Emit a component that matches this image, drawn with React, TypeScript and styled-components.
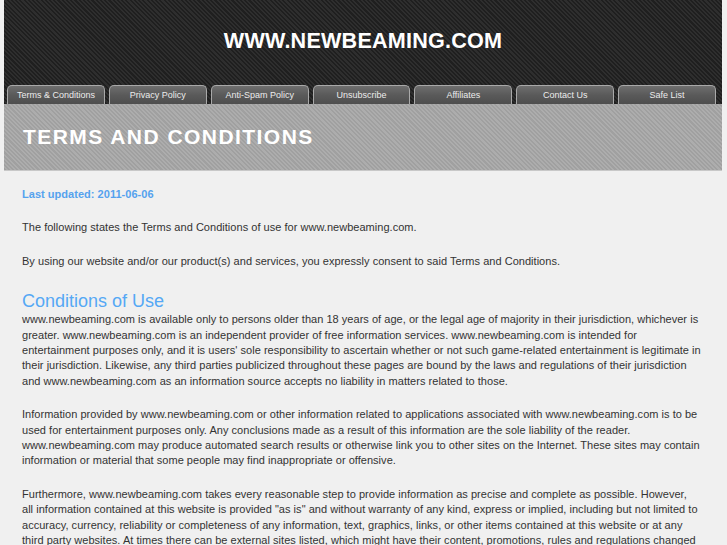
import styled, { createGlobalStyle } from "styled-components";

const GlobalStyle = createGlobalStyle`
    html, body {
        margin: 0;
        padding: 0;
        background: #f0f0f0;
        font-family: "Liberation Sans", Arial, sans-serif;
    }
`;

const Page = styled.div`
    width: 718px;
    margin-left: 4px;
`;

const Header = styled.div`
    background-color: #262626;
    background-image: repeating-linear-gradient(
        45deg,
        #1f1f1f 0px,
        #1f1f1f 1.5px,
        #2e2e2e 1.5px,
        #2e2e2e 3px
    );
    height: 104px;
    display: flex;
    flex-direction: column;
`;

const SiteTitle = styled.h1`
    margin: 0;
    height: 84px;
    display: flex;
    align-items: center;
    justify-content: center;
    color: #ffffff;
    font-size: 21.6px;
    font-weight: bold;
    letter-spacing: 0.2px;
    padding-bottom: 2px;
    box-sizing: border-box;
`;

const Tabs = styled.div`
    display: flex;
    gap: 4px;
    padding: 0 6px 0 3px;
    height: 20px;
    align-items: flex-end;
`;

const Tab = styled.a`
    flex: 1;
    height: 19px;
    box-sizing: border-box;
    border: 1px solid #a9a9a9;
    border-bottom: none;
    border-radius: 5px 5px 0 0;
    background: linear-gradient(#6e6e6e, #5a5a5a 50%, #4e4e4e);
    color: #ececec;
    font-size: 9px;
    display: flex;
    align-items: center;
    justify-content: center;
    text-decoration: none;
    padding-bottom: 1px;
`;

const Banner = styled.div`
    height: 67px;
    box-sizing: border-box;
    border-bottom: 1px solid #c8c8c8;
    background-color: #a6a6a6;
    background-image: repeating-linear-gradient(
        45deg,
        #a0a0a0 0px,
        #a0a0a0 1.5px,
        #adadad 1.5px,
        #adadad 3px
    );
    display: flex;
    align-items: center;
    padding: 0 0 0 19px;
`;

const BannerTitle = styled.h2`
    margin: 0;
    color: #ffffff;
    font-size: 21px;
    font-weight: bold;
    letter-spacing: 1.45px;
`;

const Content = styled.div`
    padding: 16px 19px 0 18px;
    color: #333333;
    font-size: 11px;
    line-height: 15.4px;
    letter-spacing: 0.03px;
`;

const Updated = styled.p`
    margin: 0 0 18px;
    color: #55a2ee;
    font-weight: bold;
`;

const Para = styled.p<{ $last?: boolean }>`
    margin: 0 0 ${(p) => (p.$last ? "0" : "18px")};
`;

const Heading = styled.h3`
    margin: 21px 0 0;
    color: #55a8f5;
    font-size: 18px;
    font-weight: normal;
    line-height: 22px;
    letter-spacing: 0;
`;

const tabs = [
    "Terms & Conditions",
    "Privacy Policy",
    "Anti-Spam Policy",
    "Unsubscribe",
    "Affiliates",
    "Contact Us",
    "Safe List",
];

const App = () => {
    return (
        <>
            <GlobalStyle />
            <Page>
                <Header>
                    <SiteTitle>WWW.NEWBEAMING.COM</SiteTitle>
                    <Tabs>
                        {tabs.map((t) => (
                            <Tab key={t} href="#">
                                {t}
                            </Tab>
                        ))}
                    </Tabs>
                </Header>
                <Banner>
                    <BannerTitle>TERMS AND CONDITIONS</BannerTitle>
                </Banner>
                <Content>
                    <Updated>Last updated: 2011-06-06</Updated>
                    <Para>The following states the Terms and Conditions of use for www.newbeaming.com.</Para>
                    <Para $last>
                        By using our website and/or our product(s) and services, you expressly consent to said Terms and Conditions.
                    </Para>
                    <Heading>Conditions of Use</Heading>
                    <Para>
                        www.newbeaming.com is available only to persons older than 18 years of age, or the legal age of majority in their jurisdiction, whichever is greater. www.newbeaming.com is an independent provider of free information services. www.newbeaming.com is intended for entertainment purposes only, and it is users' sole responsibility to ascertain whether or not such game-related entertainment is legitimate in their jurisdiction. Likewise, any third parties publicized throughout these pages are bound by the laws and regulations of their jurisdiction and www.newbeaming.com as an information source accepts no liability in matters related to those.
                    </Para>
                    <Para>
                        Information provided by www.newbeaming.com or other information related to applications associated with www.newbeaming.com is to be used for entertainment purposes only. Any conclusions made as a result of this information are the sole liability of the reader. www.newbeaming.com may produce automated search results or otherwise link you to other sites on the Internet. These sites may contain information or material that some people may find inappropriate or offensive.
                    </Para>
                    <Para>
                        Furthermore, www.newbeaming.com takes every reasonable step to provide information as precise and complete as possible. However,
                        <br />
                        all information contained at this website is provided "as is" and without warranty of any kind, express or implied, including but not limited to accuracy, currency, reliability or completeness of any information, text, graphics, links, or other items contained at this website or at any third party websites. At times there can be external sites listed, which might have their content, promotions, rules and regulations changed without notice.
                    </Para>
                </Content>
            </Page>
        </>
    );
};

export default App;
